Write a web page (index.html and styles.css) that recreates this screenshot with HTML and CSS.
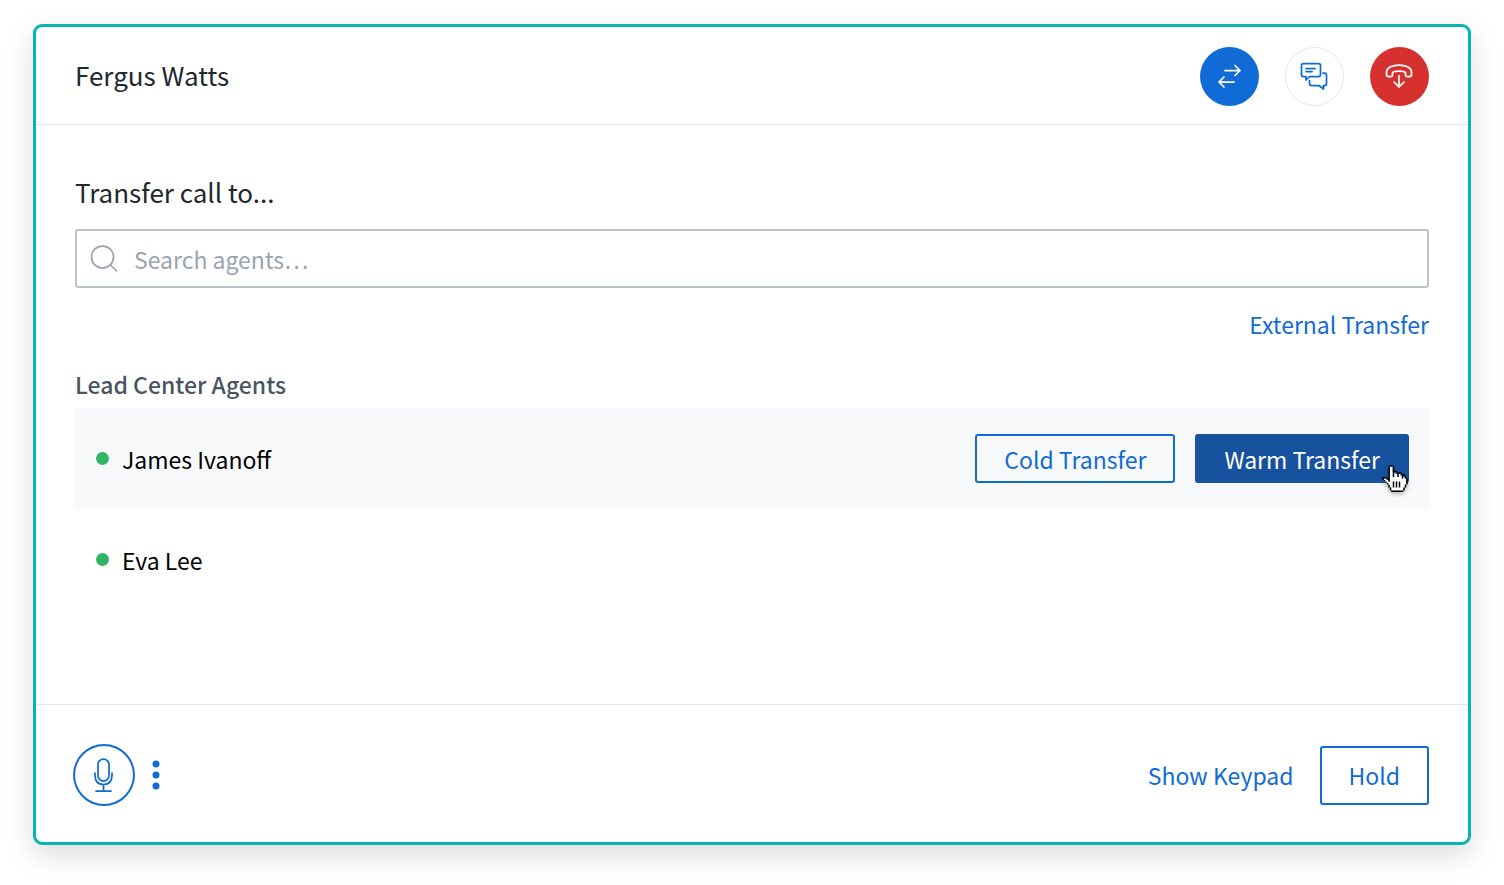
FILE: index.html
```
<!DOCTYPE html>
<html lang="en">
<head>
    <meta charset="UTF-8">
    <meta name="viewport" content="width=device-width, initial-scale=1.0">
    <title>Transfer Call</title>
    <link rel="stylesheet" href="styles.css">
</head>
<body>
    <div class="call-card">
        <!-- Caller -->
        <header class="call-header">
            <h1>Fergus Watts</h1>
            <div class="call-actions">
                <button type="button" class="round-button transfer" aria-label="Transfer">
                    <svg width="59" height="59" viewBox="1 1 59 59">
                        <path d="M26 24.500H41M36 19.500L41 24.500L36 29.500M35 36H20M25 31L20 36L25 41"/>
                    </svg>
                </button>
                <button type="button" class="round-button chat" aria-label="Messages">
                    <svg width="59" height="59" viewBox="1 1 59 59">
                        <path d="M19.500 17.500H34.500Q36.500 17.500 36.500 19.500V28.500Q36.500 30.500 34.500 30.500H25.500L22 34V30.500H19.500Q17.500 30.500 17.500 28.500V19.500Q17.500 17.500 19.500 17.500Z"/>
                        <path d="M22 22.500H31M22 25.500H28"/>
                        <path d="M39 27H40.500Q42.500 27 42.500 29V37.500Q42.500 39.500 40.500 39.500H39.500V43L35 39.500H28Q25.500 39.500 25.500 37.500V34.500"/>
                    </svg>
                </button>
                <button type="button" class="round-button hang-up" aria-label="Hang up">
                    <svg width="59" height="59" viewBox="1 1 59 59">
                        <path d="M30 19C24 19 17.500 21 17.500 26.500V28.500Q17.500 30.500 19.500 30.500H22Q23.500 30.500 23.500 29V27Q23.500 25 30 25T36.500 27V29Q36.500 30.500 38 30.500H40.500Q42.500 30.500 42.500 28.500V26.500C42.500 21 36 19 30 19Z"/>
                        <path d="M30 29.500V41M25 36L30 41L35 36"/>
                    </svg>
                </button>
            </div>
        </header>

        <!-- Agent picker -->
        <main class="transfer">
            <label for="search" class="transfer-title">Transfer call to...</label>
            <div class="search-box">
                <svg width="28" height="28" viewBox="0 0 28 28">
                    <circle cx="12.500" cy="12" r="11"/>
                    <path d="M20.500 20L26.500 26"/>
                </svg>
                <input type="text" id="search" placeholder="Search agents…">
            </div>
            <a href="#" class="external">External Transfer</a>

            <h2>Lead Center Agents</h2>
            <ul class="agents">
                <li class="agent selected">
                    <span class="status"></span>
                    <span class="name">James Ivanoff</span>
                    <button type="button" class="button small">Cold Transfer</button>
                    <button type="button" class="button small filled">
                        Warm Transfer
                        <svg class="pointer" width="26" height="27" viewBox="0 0 17 18">
                            <path class="hand" d="M5 1H7V5H9V6H12V7H14V8H15V9H16V13H15V15H14V17H6V15H5V14H4V13H3V12H2V11H1V9H3V10H4V11H5Z"/>
                            <path class="outline" d="M5 0H7V1H5ZM4 1H5V9H4ZM7 1H8V5H7ZM8 4H10V5H8ZM10 5H13V6H10ZM13 6H15V7H13ZM15 7H16V9H15ZM16 9H17V13H16ZM15 13H16V15H15ZM14 15H15V17H14ZM6 17H14V18H6ZM5 15H6V17H5ZM4 13H5V15H4ZM3 12H4V13H3ZM2 11H3V12H2ZM1 10H2V11H1ZM0 8H1V10H0ZM1 8H3V9H1ZM3 9H4V10H3ZM4 9H5V11H4ZM7 5H8V8H7ZM10 6H11V8H10ZM13 7H14V9H13ZM7 11H8V15H7ZM9 11H10V15H9ZM11 11H12V15H11Z"/>
                        </svg>
                    </button>
                </li>
                <li class="agent">
                    <span class="status"></span>
                    <span class="name">Eva Lee</span>
                </li>
            </ul>
        </main>

        <!-- Call controls -->
        <footer class="call-footer">
            <button type="button" class="mic" aria-label="Mute">
                <svg width="62" height="62" viewBox="0 0 62 62">
                    <rect x="25" y="15" width="11" height="22" rx="5.500"/>
                    <path d="M22 29V31Q22 40.500 30.500 40.500T39 31V29M30.500 40.500V47M23 47H38"/>
                </svg>
            </button>
            <button type="button" class="more" aria-label="More">
                <svg width="8" height="30" viewBox="0 0 8 30">
                    <circle cx="4" cy="4" r="3.500"/>
                    <circle cx="4" cy="15" r="3.500"/>
                    <circle cx="4" cy="26" r="3.500"/>
                </svg>
            </button>
            <a href="#" class="keypad">Show Keypad</a>
            <button type="button" class="button">Hold</button>
        </footer>
    </div>
</body>
</html>
```
FILE: styles.css
```
* {
    box-sizing: border-box;
}
body {
    font-family: "Noto Sans CJK SC", "Noto Sans", sans-serif;
    font-size: 23px;
    line-height: 36px;
    color: #000;
    background-color: #fff;
    margin: 0;
    padding: 24px 33px 40px;
    min-height: 100vh;
    display: flex;
}
h1, h2, ul {
    margin: 0;
    padding: 0;
}
button, input {
    font: inherit;
    margin: 0;
    padding: 0;
}
button {
    cursor: pointer;
}
a {
    color: #116bd6;
    text-decoration: none;
}
svg {
    display: block;
    fill: none;
    stroke: currentColor;
    stroke-width: 1.75;
    stroke-linecap: round;
    stroke-linejoin: round;
}
.call-card {
    flex: 1;
    min-width: 0;
    display: flex;
    flex-direction: column;
    border: 3px solid #09b5b1;
    border-radius: 9px;
    box-shadow: 0 10px 30px rgba(0, 0, 0, 0.14);
}

/* Header */
.call-header {
    display: flex;
    align-items: center;
    justify-content: space-between;
    padding: 20px 39px 18px;
    border-bottom: 1px solid #e4e8ee;
}
.call-header h1 {
    font-size: 26px;
    font-weight: 400;
    color: #22272e;
    padding-bottom: 3px;
}
.call-actions {
    display: flex;
    gap: 26px;
}
.round-button {
    width: 59px;
    height: 59px;
    border: none;
    border-radius: 50%;
    color: #fff;
}
.round-button.transfer { background-color: #116bd6; }
.round-button.hang-up { background-color: #d6312f; }
.round-button.chat {
    background-color: #fff;
    color: #116bd6;
    box-shadow: inset 0 0 0 1px #e4e8ee;
}

/* Transfer */
main.transfer {
    flex: 1;
    display: flex;
    flex-direction: column;
    padding: 49px 39px 24px;
}
.transfer-title {
    font-size: 26px;
    color: #22272e;
}
.search-box {
    display: flex;
    align-items: center;
    gap: 16px;
    height: 59px;
    margin-top: 19px;
    padding: 0 13px;
    border: 2px solid #bac2cc;
    border-radius: 3px;
    color: #9aa4b1;
}
.search-box input {
    flex: 1;
    min-width: 0;
    border: none;
    outline: none;
    background: none;
    color: #22272e;
}
.search-box input::placeholder {
    color: #9aa4b1;
    opacity: 1;
}
.external {
    align-self: flex-end;
    margin-top: 18px;
}
h2 {
    font-size: 23px;
    font-weight: 500;
    color: #4a545f;
    margin: 24px 0 6px;
}
.agents {
    list-style: none;
}
.agent {
    display: flex;
    align-items: center;
    height: 101px;
    padding: 0 20px 0 21px;
}
.agent.selected {
    background-color: #f7f9fb;
}
.status {
    width: 13px;
    height: 13px;
    border-radius: 50%;
    background-color: #30b566;
}
.name {
    flex: 1;
    margin-left: 13px;
}
.button {
    height: 59px;
    padding: 0 27px;
    border: 2px solid #116bd6;
    border-radius: 3px;
    background: none;
    color: #116bd6;
}
.button.small {
    position: relative;
    height: 49px;
    margin-left: 20px;
}
.button.filled {
    background-color: #17529f;
    border-color: #17529f;
    color: #fff;
}
.pointer {
    position: absolute;
    right: -1px;
    bottom: -11px;
    stroke: none;
    filter: drop-shadow(0 2px 2px rgba(0, 0, 0, 0.3));
}
.pointer .hand { fill: #fff; }
.pointer .outline { fill: #000; }

/* Footer */
.call-footer {
    display: flex;
    align-items: center;
    padding: 39px 39px 36px 37px;
    border-top: 1px solid #e4e8ee;
}
.mic, .more {
    border: none;
    background: none;
    color: #116bd6;
}
.mic {
    border-radius: 50%;
    box-shadow: inset 0 0 0 2px #116bd6;
}
.more {
    margin-left: 17px;
}
.more svg {
    fill: currentColor;
    stroke: none;
}
.keypad {
    margin-left: auto;
    margin-right: 26px;
}
```
